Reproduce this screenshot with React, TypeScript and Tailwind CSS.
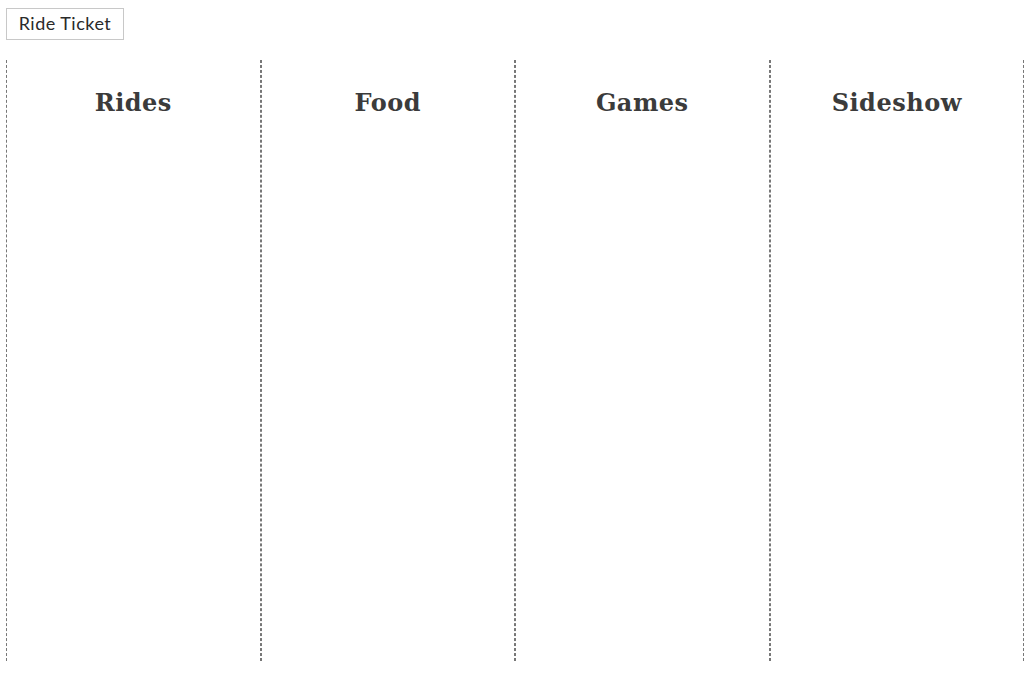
export default function App() {
  const cols = ["Rides", "Food", "Games", "Sideshow"];
  return (
    <div className="bg-white min-h-screen px-[6px] pt-[8px]">
      <button className="border border-[#c8c8c8] bg-white h-[32px] w-[118px] pb-[3px] text-[18px] text-[#2a2a2a] leading-none font-['Lato',sans-serif] font-normal tracking-[0.5px]">
        Ride Ticket
      </button>
      <div className="flex mt-[20px] w-[1018px] h-[601px]">
        {cols.map((c) => (
          <div
            key={c}
            className="flex-1 border-x border-dashed border-[#777] pt-[28px] text-center"
          >
            <h2 className="text-[24px] font-bold text-[#3b3b3b] font-['DejaVu_Serif',serif] leading-[30px] tracking-[0.5px]">
              {c}
            </h2>
          </div>
        ))}
      </div>
    </div>
  );
}
